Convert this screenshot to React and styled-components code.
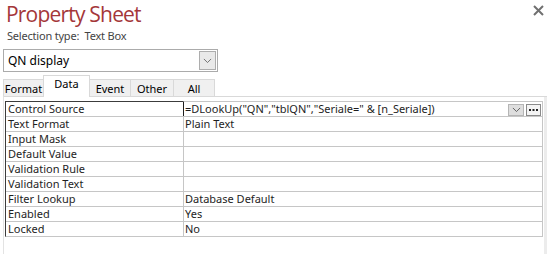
import React from "react";
import styled, { createGlobalStyle } from "styled-components";

const Global = createGlobalStyle`
  html, body { margin: 0; padding: 0; background: #fff; }
  body { font-family: "Noto Sans", "Open Sans", sans-serif; color: #1e1e1e; }
`;

const Page = styled.div`
  width: 556px;
  height: 254px;
  overflow: hidden;
  background: #fff;
  display: flex;
  flex-direction: column;
`;

const Header = styled.div`
  display: flex;
  justify-content: space-between;
  align-items: flex-start;
  height: 28px;
  padding-left: 6px;
  padding-right: 12px;
`;

const Title = styled.h1`
  margin: 0;
  font-family: "Open Sans", "Noto Sans", sans-serif;
  font-weight: 400;
  font-size: 21px;
  line-height: 29px;
  letter-spacing: -0.8px;
  color: #a4373a;
`;

const Close = styled.button`
  border: 0;
  background: transparent;
  padding: 0;
  margin-top: 5px;
  width: 11px;
  height: 11px;
  display: flex;
  cursor: pointer;
`;

const SelectionType = styled.div`
  padding-left: 7px;
  height: 16px;
  font-size: 11px;
  line-height: 16px;
  letter-spacing: -0.2px;
  color: #444;
`;

const Combo = styled.div`
  margin: 5px 0 0 3px;
  width: 215px;
  height: 23px;
  box-sizing: border-box;
  border: 1px solid #ababab;
  display: flex;
  align-items: center;
  justify-content: space-between;
  padding: 0 1px 0 4px;
  font-size: 12px;
  color: #000;
`;

const ComboButton = styled.span`
  width: 17px;
  height: 19px;
  box-sizing: border-box;
  border: 1px solid #adadad;
  background: #e9e9e9;
  display: flex;
  align-items: center;
  justify-content: center;
`;

const Tabs = styled.div`
  margin: 3px 0 0 3px;
  height: 21px;
  display: flex;
  align-items: flex-end;
`;

const Tab = styled.div`
  width: ${(p) => p.$w}px;
  box-sizing: border-box;
  height: ${(p) => (p.$active ? 22 : 17)}px;
  background: ${(p) => (p.$active ? "#fff" : "#f0f0f0")};
  border-top: 1px solid #d9d9d9;
  border-left: ${(p) => (p.$first || p.$active ? "1px solid #d9d9d9" : "0")};
  border-right: 1px solid #d9d9d9;
  margin-bottom: ${(p) => (p.$active ? -1 : 0)}px;
  margin-left: ${(p) => (p.$active ? -1 : 0)}px;
  position: relative;
  z-index: ${(p) => (p.$active ? 1 : 0)};
  display: flex;
  justify-content: center;
  align-items: ${(p) => (p.$active ? "flex-start" : "center")};
  font-size: 11px;
  line-height: 15px;
  color: #000;
`;

const Panel = styled.div`
  margin-left: 3px;
  width: 544px;
  flex: 1;
  box-sizing: border-box;
  border-top: 1px solid #d9d9d9;
  border-left: 1px solid #e3e3e3;
  padding: 4px 0 0 1px;
  display: flex;
`;

const Grid = styled.div`
  width: 539px;
  align-self: flex-start;
  box-sizing: border-box;
  border-left: 1px solid #3c3c3c;
  border-right: 1px solid #c6c6c6;
  border-bottom: 1px solid #c6c6c6;
  display: grid;
  grid-template-columns: 177px 1fr;
`;

const Cell = styled.div`
  height: 15px;
  box-sizing: border-box;
  border-top: 1px solid ${(p) => (p.$first ? "#3c3c3c" : "#c6c6c6")};
  border-left: ${(p) => (p.$value ? `1px solid ${p.$focus ? "#1e1e1e" : "#c6c6c6"}` : "0")};
  padding-left: ${(p) => (p.$value ? 1 : 2)}px;
  font-size: 11px;
  line-height: 14px;
  white-space: nowrap;
  color: #1e1e1e;
  display: flex;
  align-items: center;
  justify-content: space-between;
`;

const CellButtons = styled.div`
  display: flex;
  gap: 2px;
  padding-right: 1px;
  margin-top: 2px;
`;

const SmallButton = styled.span`
  width: ${(p) => p.$w}px;
  height: 12px;
  box-sizing: border-box;
  border: 1px solid ${(p) => (p.$dark ? "#8a8a8a" : "#b5b5b5")};
  background: ${(p) => (p.$dark ? "#f4f4f4" : "#dedede")};
  display: flex;
  align-items: center;
  justify-content: center;
`;

const Scroll = styled.div`
  width: 3px;
  margin-left: 1px;
  background: #ececec;
  margin-top: -4px;
`;

const Chevron = ({ size = 9, color = "#666" }) => (
  <svg width={size} height={size / 2 + 1} viewBox="0 0 10 6">
    <path d="M1 1 L5 5 L9 1" fill="none" stroke={color} strokeWidth="1" />
  </svg>
);

const rows = [
  ["Control Source", '=DLookUp("QN","tblQN","Seriale=" & [n_Seriale])'],
  ["Text Format", "Plain Text"],
  ["Input Mask", ""],
  ["Default Value", ""],
  ["Validation Rule", ""],
  ["Validation Text", ""],
  ["Filter Lookup", "Database Default"],
  ["Enabled", "Yes"],
  ["Locked", "No"],
];

const tabs = [
  ["Format", 41],
  ["Data", 47],
  ["Event", 41],
  ["Other", 43],
  ["All", 41],
];

export default function App() {
  return (
    <Page>
      <Global />
      <Header>
        <Title>Property Sheet</Title>
        <Close aria-label="Close">
          <svg width="11" height="11" viewBox="0 0 11 11">
            <path d="M1 1 L10 10 M10 1 L1 10" stroke="#707070" strokeWidth="2" />
          </svg>
        </Close>
      </Header>
      <SelectionType>Selection type:&nbsp; Text Box</SelectionType>
      <Combo>
        <span>QN display</span>
        <ComboButton>
          <Chevron />
        </ComboButton>
      </Combo>
      <Tabs>
        {tabs.map(([t, w], i) => (
          <Tab key={t} $w={w} $active={t === "Data"} $first={i === 0}>
            {t}
          </Tab>
        ))}
      </Tabs>
      <Panel>
        <Grid>
          {rows.map(([label, value], i) => (
            <React.Fragment key={label}>
              <Cell $first={i === 0}>{label}</Cell>
              <Cell $value $focus={i === 0}>
                <span>{value}</span>
                {i === 0 && (
                  <CellButtons>
                    <SmallButton $w={16}>
                      <Chevron size={9} color="#555" />
                    </SmallButton>
                    <SmallButton $w={15} $dark>
                      <svg width="9" height="3" viewBox="0 0 9 3">
                        <rect x="0" y="0" width="2" height="2" fill="#222" />
                        <rect x="3.5" y="0" width="2" height="2" fill="#222" />
                        <rect x="7" y="0" width="2" height="2" fill="#222" />
                      </svg>
                    </SmallButton>
                  </CellButtons>
                )}
              </Cell>
            </React.Fragment>
          ))}
        </Grid>
        <Scroll />
      </Panel>
    </Page>
  );
}
